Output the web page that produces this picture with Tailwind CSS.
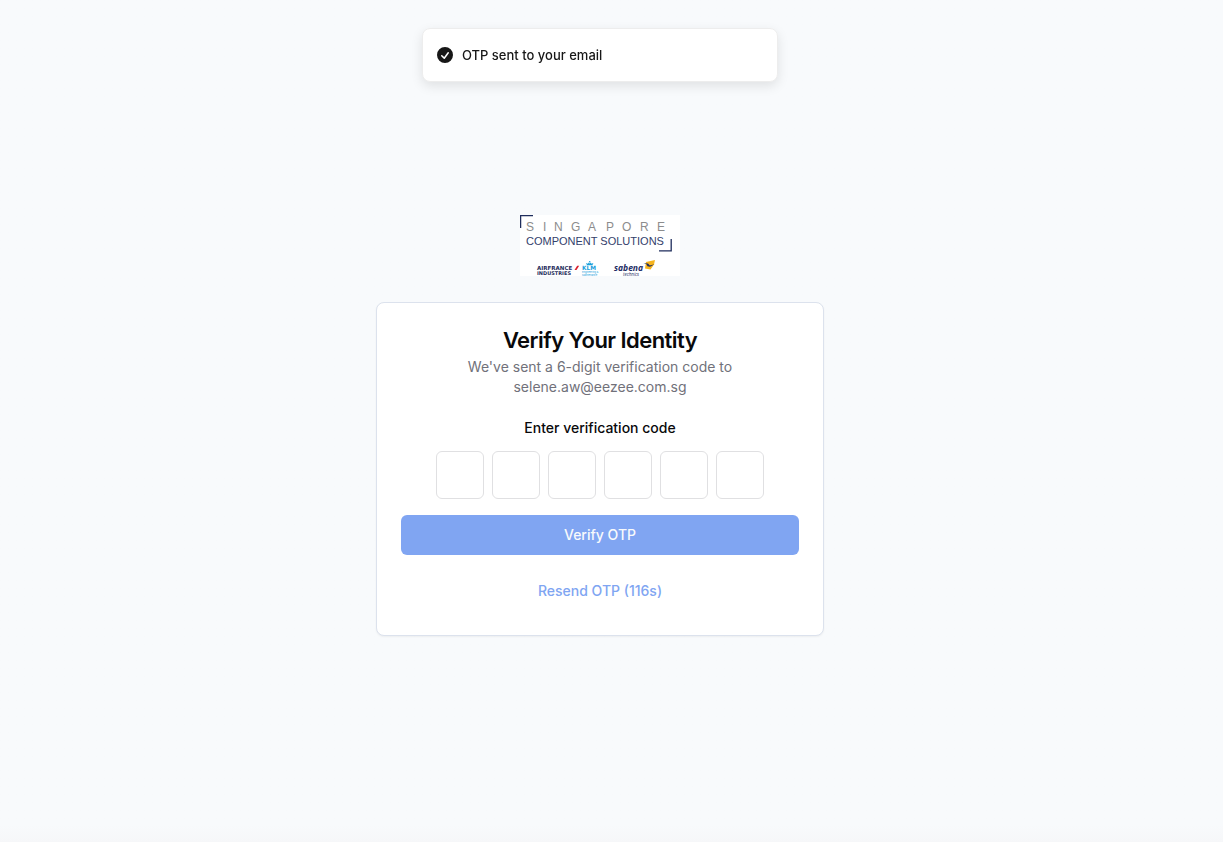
<!DOCTYPE html>
<html lang="en">
<head>
    <meta charset="UTF-8">
    <meta name="viewport" content="width=device-width, initial-scale=1.0">
    <title>Verify Your Identity</title>
    <script src="https://cdn.jsdelivr.net/npm/@tailwindcss/browser@4"></script>
</head>
<body class="bg-[#f8fafc] font-['Inter',sans-serif] text-[#09090b] antialiased">
    <!-- Toast -->
    <div class="fixed top-7 left-0 right-[23px] flex justify-center">
        <div role="status" class="flex items-center gap-[7px] w-[356px] px-3 py-4 bg-white border border-[#ededed] rounded-lg shadow-[0_4px_12px_rgba(0,0,0,0.1)] text-[13px] leading-5 font-medium text-[#171717]">
            <svg class="w-5 h-5" viewBox="0 0 20 20" fill="currentColor">
                <path fill-rule="evenodd" d="M10 18a8 8 0 100-16 8 8 0 000 16zm3.857-9.809a.75.75 0 00-1.214-.882l-3.483 4.79-1.88-1.88a.75.75 0 10-1.06 1.061l2.5 2.5a.75.75 0 001.137-.089l4-5.5z" clip-rule="evenodd"/>
            </svg>
            <span>OTP sent to your email</span>
        </div>
    </div>

    <main class="min-h-screen flex flex-col items-center justify-center pt-[9px] pr-[23px] bg-linear-to-b from-[#f8fafc] from-98% to-[#f6f7f9]">
        <!-- Logo -->
        <svg class="w-40 h-[61px] mb-[26px]" viewBox="0 0 160 61" role="img" aria-label="Singapore Component Solutions">
            <rect width="160" height="61" fill="#fff"/>
            <path d="M.6 13V.6H13M139 35.800h12.200V24" fill="none" stroke="#1f2d5c" stroke-width="1.300"/>
            <text y="16" x="6 23 34 51 68 86 102 120 137" font-family="Liberation Sans, sans-serif" font-size="12" fill="#8c8c8c">SINGAPORE</text>
            <text x="6" y="30" font-family="Liberation Sans, sans-serif" font-size="11" fill="#33406b">COMPONENT SOLUTIONS</text>
            <g font-family="DejaVu Sans, sans-serif" font-weight="700" fill="#1f2d5c">
                <text x="17" y="54.500" font-size="5.500">AIRFRANCE</text>
                <text x="17" y="59.500" font-size="5">INDUSTRIES</text>
            </g>
            <path d="M54.500 55l2.700-4.200h2L56.500 55z" fill="#d9202e"/>
            <!-- KLM -->
            <g fill="#1ba0dc">
                <path d="M66 48l1 2.300h5.400l1-2.300-2 .8-.5-1.300-1.200 1-1.200-1-.5 1.300z"/>
                <circle cx="69.700" cy="46.800" r=".8"/>
                <text x="62" y="54.500" font-family="DejaVu Sans, sans-serif" font-size="5.800" font-weight="700">KLM</text>
                <text x="62" y="57.500" font-family="Inter, sans-serif" font-size="2.500">Engineering &amp;</text>
                <text x="62" y="60.500" font-family="Inter, sans-serif" font-size="2.500">Maintenance</text>
            </g>
            <!-- Sabena technics -->
            <text x="94" y="56" font-family="Open Sans, sans-serif" font-size="8.500" font-weight="700" font-style="italic" fill="#1d2c64">sabena</text>
            <text x="103" y="60.700" font-family="Open Sans, sans-serif" font-size="4.500" font-style="italic" fill="#1d2c64">technics</text>
            <path d="M126 47l9-2-1 4.500-3.500 5-5.500-1z" fill="#f6b41c"/>
            <path d="M123.500 48.200l4.500.3 1.800 2 4.700-1.300-4.500 2.600-2.500-.5-1-2.100z" fill="#1d2c64"/>
        </svg>

        <!-- Card -->
        <div class="w-full max-w-md bg-white border border-[#dce2ed] rounded-lg shadow-xs p-6 text-center text-sm">
            <h1 class="text-[22px] leading-[26px] font-semibold tracking-tight">Verify Your Identity</h1>
            <p class="mt-1 text-[#71717a]">We've sent a 6-digit verification code to<br>selene.aw@eezee.com.sg</p>

            <form id="otpForm">
                <fieldset>
                    <legend class="w-full pt-[21px] font-medium">Enter verification code</legend>
                    <div class="mt-[13px] flex justify-center gap-2">
                        <input aria-label="Digit 1" type="text" inputmode="numeric" maxlength="1" class="w-12 h-12 border border-[#e0e0e2] rounded-md text-center text-lg">
                        <input aria-label="Digit 2" type="text" inputmode="numeric" maxlength="1" class="w-12 h-12 border border-[#e0e0e2] rounded-md text-center text-lg">
                        <input aria-label="Digit 3" type="text" inputmode="numeric" maxlength="1" class="w-12 h-12 border border-[#e0e0e2] rounded-md text-center text-lg">
                        <input aria-label="Digit 4" type="text" inputmode="numeric" maxlength="1" class="w-12 h-12 border border-[#e0e0e2] rounded-md text-center text-lg">
                        <input aria-label="Digit 5" type="text" inputmode="numeric" maxlength="1" class="w-12 h-12 border border-[#e0e0e2] rounded-md text-center text-lg">
                        <input aria-label="Digit 6" type="text" inputmode="numeric" maxlength="1" class="w-12 h-12 border border-[#e0e0e2] rounded-md text-center text-lg">
                    </div>
                </fieldset>
                <button type="submit" disabled class="mt-4 w-full h-10 rounded-md bg-[#80a5f2] text-[#f8fafc] font-medium">Verify OTP</button>
                <button type="button" disabled class="mt-4 h-10 px-4 text-[#80a5f2] font-medium">Resend OTP (116s)</button>
            </form>
        </div>
    </main>

    <script>
        const digits = document.querySelectorAll('#otpForm input');

        // Move to the next box once a digit is typed
        digits.forEach((input, i) => {
            input.addEventListener('input', () => {
                if (input.value && digits[i + 1]) {
                    digits[i + 1].focus();
                }
            });
        });
    </script>
</body>
</html>
